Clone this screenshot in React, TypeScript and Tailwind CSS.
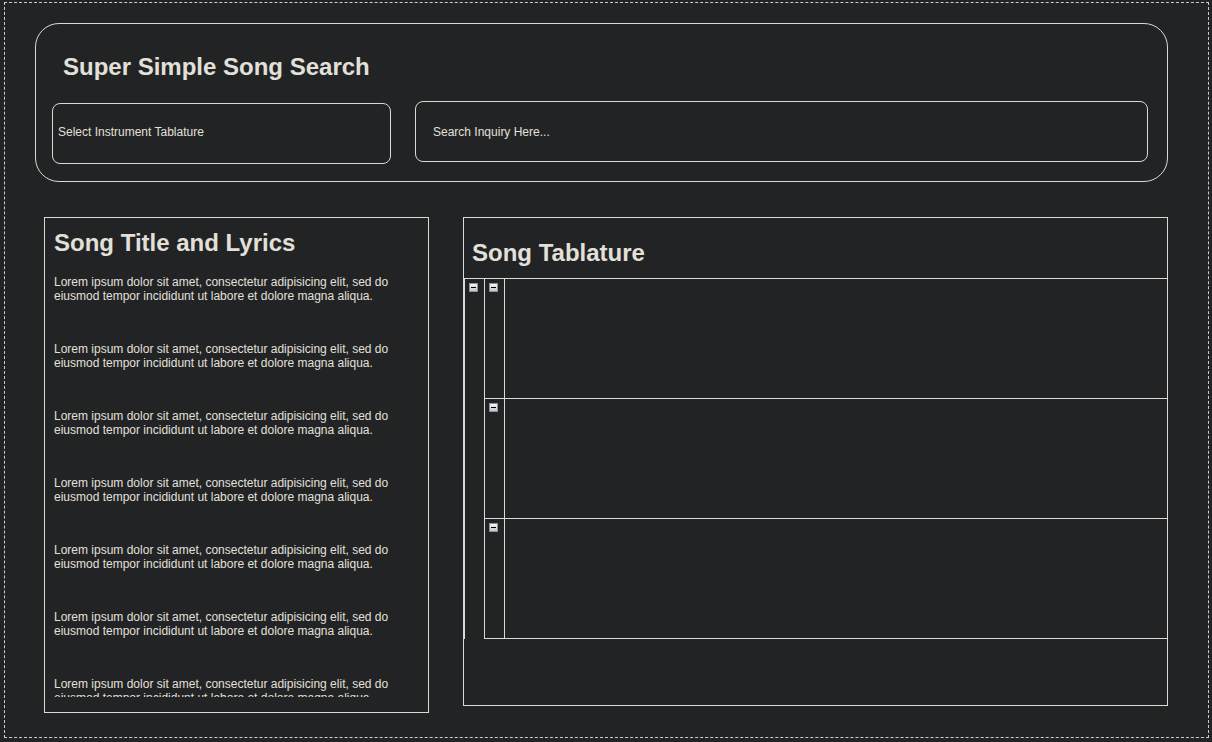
const lorem =
  "Lorem ipsum dolor sit amet, consectetur adipisicing elit, sed do eiusmod tempor incididunt ut labore et dolore magna aliqua.";

const font = { fontFamily: '"Liberation Sans", Arial, sans-serif' };

const Toggle = () => (
  <div className="w-[9px] h-[9px] border border-[#8c929c] bg-gradient-to-b from-[#f4f5f7] to-[#c3c8d1] flex items-center justify-center">
    <div className="w-[5px] h-[1px] bg-black"></div>
  </div>
);

export default function App() {
  return (
    <div className="w-full h-[742px] bg-[#222325] overflow-hidden pt-[2px] pl-[4px] text-[#e3e0da]" style={font}>
      <div className="w-[1205px] h-[736px] border border-dashed border-[#cfccc5] flex flex-col">
        {/* Search header */}
        <div className="ml-[30px] mt-[20px] w-[1133px] h-[159px] rounded-[24px] border border-[#dcd9d2] px-[16px] pt-[29px]">
          <h1 className="pl-[11px] text-[24px] leading-[28px] font-bold">Super Simple Song Search</h1>
          <div className="flex items-start gap-[24px] mt-[20px]">
            <div className="mt-[2px] w-[339px] h-[61px] rounded-[8px] border border-[#dcd9d2] pl-[5px] pb-[3px] flex items-center text-[12px] leading-[14px]">
              Select Instrument Tablature
            </div>
            <div className="w-[733px] h-[61px] rounded-[8px] border border-[#dcd9d2] pl-[17px] flex items-center text-[12px] leading-[14px]">
              Search Inquiry Here...
            </div>
          </div>
        </div>

        {/* Panels */}
        <div className="ml-[39px] mt-[35px] flex items-start gap-[34px]">
          {/* Lyrics */}
          <div className="w-[385px] h-[496px] border border-[#dcd9d2] pl-[9px] pt-[11px]">
            <h2 className="text-[24px] leading-[28px] font-bold">Song Title and Lyrics</h2>
            <div className="mt-[18px] h-[422px] overflow-hidden pr-[20px] flex flex-col gap-[39px]">
              {Array.from({ length: 7 }).map((_, i) => (
                <p key={i} className="text-[12px] leading-[14px]">
                  {lorem}
                </p>
              ))}
            </div>
          </div>

          {/* Tablature */}
          <div className="w-[705px] h-[489px] border border-[#dcd9d2] pt-[21px]">
            <h2 className="pl-[8px] text-[24px] leading-[28px] font-bold">Song Tablature</h2>
            <div className="mt-[11px] border-t border-l border-[#dcd9d2] flex">
              <div className="w-[20px] border-r border-[#dcd9d2] pl-[4px] pt-[4px]">
                <Toggle />
              </div>
              <div className="flex-1 flex flex-col">
                {Array.from({ length: 3 }).map((_, i) => (
                  <div key={i} className="h-[120px] border-b border-[#dcd9d2] flex">
                    <div className="w-[20px] border-r border-[#dcd9d2] pl-[4px] pt-[4px]">
                      <Toggle />
                    </div>
                    <div className="flex-1"></div>
                  </div>
                ))}
              </div>
            </div>
          </div>
        </div>
      </div>
    </div>
  );
}
